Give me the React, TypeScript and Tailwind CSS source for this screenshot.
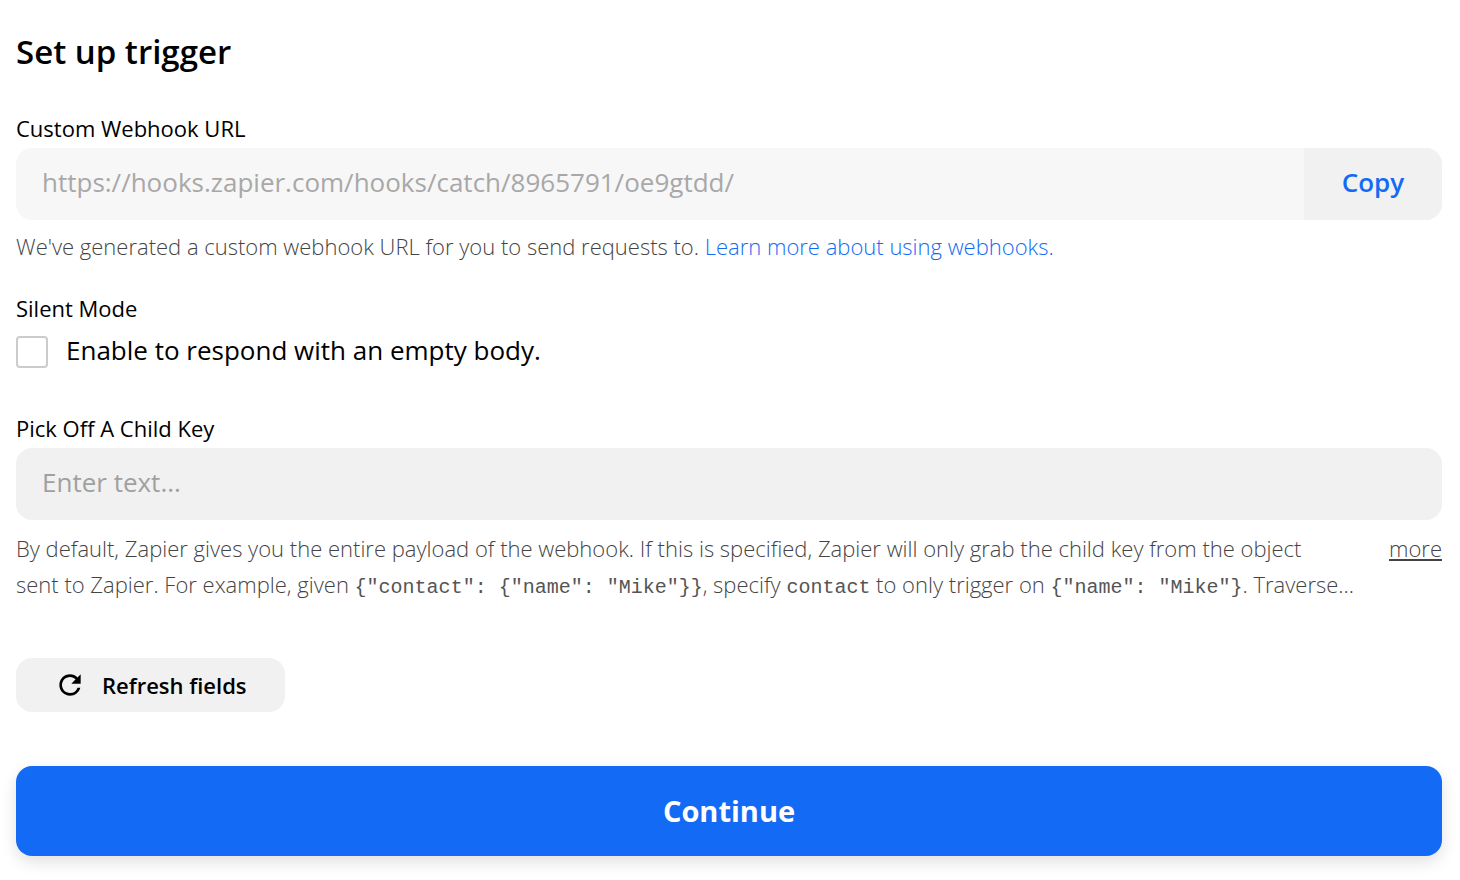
import { useState } from "react";
import { MdRefresh } from "react-icons/md";

const WEBHOOK_URL = "https://hooks.zapier.com/hooks/catch/8965791/oe9gtdd/";

function Code({ children }: { children: string }) {
  return <code className="font-['Liberation_Mono',monospace] text-[20px] leading-none text-[#555]">{children}</code>;
}

export default function App() {
  const [silent, setSilent] = useState(false);
  const [childKey, setChildKey] = useState("");

  return (
    <main className="min-h-screen bg-white pt-8 pr-[18px] pb-6 pl-4 font-['Open_Sans',sans-serif] text-black">
      <h1 className="text-[33px] leading-10 font-semibold">Set up trigger</h1>

      {/* Webhook URL */}
      <section className="mt-10">
        <label htmlFor="webhook-url" className="block pb-1 text-[22px] leading-8 font-medium">
          Custom Webhook URL
        </label>
        <div className="flex h-[72px] overflow-hidden rounded-2xl bg-[#f7f7f7]">
          <input
            id="webhook-url"
            type="text"
            readOnly
            value={WEBHOOK_URL}
            className="min-w-0 flex-1 bg-transparent px-[26px] pb-1 text-[26px] font-medium text-[#a8a8a8] outline-none"
          />
          <button
            type="button"
            onClick={() => navigator.clipboard?.writeText(WEBHOOK_URL)}
            className="w-[138px] bg-[#f1f1f1] pb-1 text-[26px] font-semibold text-[#136bf5]"
          >
            Copy
          </button>
        </div>
        <p className="mt-2 text-[22px] leading-9 font-light text-[#444]">
          We've generated a custom webhook URL for you to send requests to.{" "}
          <a href="#webhooks" className="text-[#136bf5]">
            Learn more about using webhooks.
          </a>
        </p>
      </section>

      {/* Silent mode */}
      <fieldset className="mt-7">
        <legend className="text-[22px] leading-8 font-medium">Silent Mode</legend>
        <label className="mt-2 flex items-center gap-[18px] text-[26px] font-medium">
          <input
            type="checkbox"
            checked={silent}
            onChange={(e) => setSilent(e.target.checked)}
            className="size-8 appearance-none rounded border-2 border-[#ccc] bg-white checked:bg-[#136bf5]"
          />
          <span className="pb-1 leading-9">Enable to respond with an empty body.</span>
        </label>
      </fieldset>

      {/* Child key */}
      <section className="mt-10">
        <label htmlFor="child-key" className="block pb-1 text-[22px] leading-8 font-medium">
          Pick Off A Child Key
        </label>
        <input
          id="child-key"
          type="text"
          value={childKey}
          onChange={(e) => setChildKey(e.target.value)}
          placeholder="Enter text..."
          className="block h-[72px] w-full rounded-2xl bg-[#f1f1f1] px-[26px] pb-1 text-[26px] font-medium outline-none placeholder:text-[#a0a0a0]"
        />
        <div className="mt-[10px] flex items-start gap-5 text-[22px] leading-9 font-light text-[#444]">
          <p className="min-w-0 flex-1">
            By default, Zapier gives you the entire payload of the webhook. If this is specified, Zapier will only grab
            the child key from the object sent&nbsp;to Zapier. For example, given{" "}
            <Code>{'{"contact": {"name": "Mike"}}'}</Code>, specify <Code>contact</Code> to only trigger on{" "}
            <Code>{'{"name": "Mike"}'}</Code>. Traverse...
          </p>
          <button type="button" className="underline">
            more
          </button>
        </div>
      </section>

      <button
        type="button"
        className="mt-14 flex h-[54px] items-center gap-4 rounded-2xl bg-[#f1f1f1] px-[38px] text-[22px] font-semibold"
      >
        <MdRefresh className="size-8" />
        Refresh fields
      </button>

      <button
        type="submit"
        className="mt-[54px] h-[90px] w-full rounded-2xl bg-[#136bf5] text-[29px] font-bold text-white shadow-[0_6px_16px_rgba(0,0,0,0.12)]"
      >
        Continue
      </button>
    </main>
  );
}
